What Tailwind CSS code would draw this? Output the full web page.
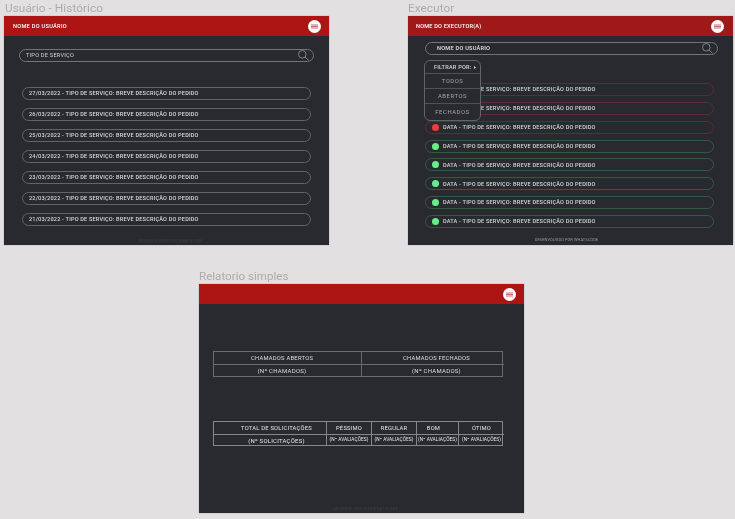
<!DOCTYPE html>
<html><head><meta charset="utf-8"><script src="https://cdn.jsdelivr.net/npm/@tailwindcss/browser@4"></script></head>
<body class="w-[735px] h-[519px] overflow-hidden bg-[#e2e0e0] font-['Roboto',sans-serif]">
<div class="relative w-[735px] h-[519px] will-change-transform">

<p class="absolute left-[5px] top-[0px] text-[11.8px] leading-[16px] text-[#adabab] tracking-[0.05px]">Usuário - Histórico</p>
<section class="absolute left-[4px] top-[16px] w-[325px] h-[229px] bg-[#292a2f] flex flex-col shadow-[0_0_1px_#888]">
  <header class="h-[20px] shrink-0 bg-[#ad1414] flex items-center justify-between pl-[9px] pr-[8px]">
    <span class="text-[5.6px] font-medium text-white tracking-[0.3px]">NOME DO USUÁRIO</span>
    <svg width="13" height="13" viewBox="0 0 13 13"><circle cx="6.5" cy="6.5" r="6.5" fill="#fff"/><path d="M3 4.5h7v1H3zM3 6h7v1H3zM3 7.5h7v1H3z" fill="#c96a6a"/></svg>
  </header>
  <div class="ml-[15px] mt-[13px] w-[295px] h-[13px] rounded-full border border-[#727477] flex items-center justify-between pl-[6px] pr-[4px]">
    <span class="text-[5.6px] text-[#d4d4d4] tracking-[0.25px]">TIPO DE SERVIÇO</span>
    <svg width="11" height="11" viewBox="0 0 11 11" fill="none" stroke="#a5a6a8" stroke-width=".7"><circle cx="4.3" cy="4.3" r="3.8"/><path d="M7 7 10.6 10.4"/></svg>
  </div>
  <div class="ml-[18px] mt-[24.5px] w-[289px] flex flex-col gap-[8.1px] text-[5.6px] font-medium text-[#d8d8d8] tracking-[0.17px]">
    <div class="h-[13px] rounded-full border border-[#626467] flex items-center pl-[6px]">27/03/2022 - TIPO DE SERVIÇO: BREVE DESCRIÇÃO DO PEDIDO</div>
    <div class="h-[13px] rounded-full border border-[#626467] flex items-center pl-[6px]">26/03/2022 - TIPO DE SERVIÇO: BREVE DESCRIÇÃO DO PEDIDO</div>
    <div class="h-[13px] rounded-full border border-[#626467] flex items-center pl-[6px]">25/03/2022 - TIPO DE SERVIÇO: BREVE DESCRIÇÃO DO PEDIDO</div>
    <div class="h-[13px] rounded-full border border-[#626467] flex items-center pl-[6px]">24/03/2022 - TIPO DE SERVIÇO: BREVE DESCRIÇÃO DO PEDIDO</div>
    <div class="h-[13px] rounded-full border border-[#626467] flex items-center pl-[6px]">23/03/2022 - TIPO DE SERVIÇO: BREVE DESCRIÇÃO DO PEDIDO</div>
    <div class="h-[13px] rounded-full border border-[#626467] flex items-center pl-[6px]">22/03/2022 - TIPO DE SERVIÇO: BREVE DESCRIÇÃO DO PEDIDO</div>
    <div class="h-[13px] rounded-full border border-[#626467] flex items-center pl-[6px]">21/03/2022 - TIPO DE SERVIÇO: BREVE DESCRIÇÃO DO PEDIDO</div>
  </div>
  <p class="mt-auto mb-[2px] pl-[8px] text-center text-[4px] leading-[5px] text-[#3f4145] tracking-[0.1px]">DESENVOLVIDO POR WHATSCODE</p>
</section>

<p class="absolute left-[408px] top-[0px] text-[11.8px] leading-[16px] text-[#adabab] tracking-[0.05px]">Executor</p>
<section class="absolute left-[408px] top-[16px] w-[325px] h-[229px] bg-[#292a2f] flex flex-col shadow-[0_0_1px_#888]">
  <header class="h-[20px] shrink-0 bg-[#9f1919] flex items-center justify-between pl-[8px] pr-[9px]">
    <span class="text-[5.6px] font-medium text-white tracking-[0.2px]">NOME DO EXECUTOR(A)</span>
    <svg width="13" height="13" viewBox="0 0 13 13"><circle cx="6.5" cy="6.5" r="6.5" fill="#fff"/><path d="M3 4.5h7v1H3zM3 6h7v1H3zM3 7.5h7v1H3z" fill="#c96a6a"/></svg>
  </header>
  <div class="ml-[17px] mt-[6px] w-[293px] h-[13px] rounded-full border border-[#727477] flex items-center justify-between pl-[11px] pr-[4px]">
    <span class="text-[5.6px] font-medium text-[#e0e0e0] tracking-[0.25px]">NOME DO USUÁRIO</span>
    <svg width="11" height="11" viewBox="0 0 11 11" fill="none" stroke="#a5a6a8" stroke-width=".7"><circle cx="4.3" cy="4.3" r="3.8"/><path d="M7 7 10.6 10.4"/></svg>
  </div>
  <div class="ml-[17px] mt-[28px] w-[289px] flex flex-col gap-[5.85px] text-[5.6px] font-medium text-[#d4d4d4] tracking-[0.17px]">
    <div class="h-[13px] rounded-full border border-[#5c2e31] flex items-center gap-[4px] pl-[6px]"><i class="block w-[7px] h-[7px] rounded-full bg-[#f23a3a]"></i>DATA - TIPO DE SERVIÇO: BREVE DESCRIÇÃO DO PEDIDO</div>
    <div class="h-[13px] rounded-full border border-[#5c2e31] flex items-center gap-[4px] pl-[6px]"><i class="block w-[7px] h-[7px] rounded-full bg-[#f23a3a]"></i>DATA - TIPO DE SERVIÇO: BREVE DESCRIÇÃO DO PEDIDO</div>
    <div class="h-[13px] rounded-full border border-[#5c2e31] flex items-center gap-[4px] pl-[6px]"><i class="block w-[7px] h-[7px] rounded-full bg-[#f23a3a]"></i>DATA - TIPO DE SERVIÇO: BREVE DESCRIÇÃO DO PEDIDO</div>
    <div class="h-[13px] rounded-full border border-[#345a42] flex items-center gap-[4px] pl-[6px]"><i class="block w-[7px] h-[7px] rounded-full bg-[#66ee88]"></i>DATA - TIPO DE SERVIÇO: BREVE DESCRIÇÃO DO PEDIDO</div>
    <div class="h-[13px] rounded-full border border-[#345a42] flex items-center gap-[4px] pl-[6px]"><i class="block w-[7px] h-[7px] rounded-full bg-[#66ee88]"></i>DATA - TIPO DE SERVIÇO: BREVE DESCRIÇÃO DO PEDIDO</div>
    <div class="h-[13px] rounded-full border border-[#345a42] flex items-center gap-[4px] pl-[6px]"><i class="block w-[7px] h-[7px] rounded-full bg-[#66ee88]"></i>DATA - TIPO DE SERVIÇO: BREVE DESCRIÇÃO DO PEDIDO</div>
    <div class="h-[13px] rounded-full border border-[#345a42] flex items-center gap-[4px] pl-[6px]"><i class="block w-[7px] h-[7px] rounded-full bg-[#66ee88]"></i>DATA - TIPO DE SERVIÇO: BREVE DESCRIÇÃO DO PEDIDO</div>
    <div class="h-[13px] rounded-full border border-[#345a42] flex items-center gap-[4px] pl-[6px]"><i class="block w-[7px] h-[7px] rounded-full bg-[#66ee88]"></i>DATA - TIPO DE SERVIÇO: BREVE DESCRIÇÃO DO PEDIDO</div>
  </div>
  <p class="mt-auto mb-[3px] pr-[8px] text-center text-[4px] leading-[5px] text-[#9a9b9d] tracking-[0.05px]">DESENVOLVIDO POR WHATSCODE</p>
  <div class="absolute left-[16px] top-[44px] w-[57px] h-[61px] rounded-[6px] border border-[#626467] bg-[#292a2f] flex flex-col text-[5.9px] text-[#a2a3a5] tracking-[0.55px]">
    <div class="h-[13px] flex items-center pl-[9px] gap-[3px] border-b border-[#4f5154] text-[#d6d6d6] text-[5.6px] font-medium tracking-[0.2px]">FILTRAR POR: <svg width="2" height="3" viewBox="0 0 2 3"><path d="M0 0 2 1.5 0 3z" fill="#ddd"/></svg></div>
    <div class="h-[15px] flex items-center justify-center border-b border-[#4f5154]">TODOS</div>
    <div class="h-[15px] flex items-center justify-center border-b border-[#4f5154]">ABERTOS</div>
    <div class="flex-1 flex items-center justify-center">FECHADOS</div>
  </div>
</section>

<p class="absolute left-[199px] top-[268px] text-[11.6px] leading-[16px] text-[#adabab]">Relatorio simples</p>
<section class="absolute left-[199px] top-[284px] w-[325px] h-[229px] bg-[#292a2f] flex flex-col shadow-[0_0_1px_#888]">
  <header class="h-[20px] shrink-0 bg-[#ad1414] flex items-center justify-end pr-[8px]">
    <svg width="13" height="13" viewBox="0 0 13 13"><circle cx="6.5" cy="6.5" r="6.5" fill="#fff"/><path d="M3 4.5h7v1H3zM3 6h7v1H3zM3 7.5h7v1H3z" fill="#c96a6a"/></svg>
  </header>
  <div class="ml-[14px] mt-[47px] w-[290px] h-[26px] grid grid-cols-[148px_142px] grid-rows-[13px_1fr] border border-[#6a6c6f] text-[5.8px] text-[#dedede] tracking-[0.25px] text-center">
    <div class="flex items-center justify-center border-r border-b border-[#6a6c6f] pr-[11px]">CHAMADOS ABERTOS</div>
    <div class="flex items-center justify-center border-b border-[#6a6c6f] pl-[7px]">CHAMADOS FECHADOS</div>
    <div class="flex items-center justify-center border-r border-[#6a6c6f] pr-[11px] text-[6px]">(Nº CHAMADOS)</div>
    <div class="flex items-center justify-center pl-[7px] text-[6px]">(Nº CHAMADOS)</div>
  </div>
  <div class="ml-[14px] mt-[44px] w-[290px] h-[25px] grid grid-cols-[113px_45px_45px_42px_45px] grid-rows-[13px_1fr] border border-[#85878a] text-[5.8px] text-[#e6e6e6] tracking-[0.22px] text-center">
    <div class="flex items-center justify-center border-r border-b border-[#85878a] pl-[13px]">TOTAL DE SOLICITAÇÕES</div>
    <div class="flex items-center justify-center border-r border-b border-[#85878a]">PÉSSIMO</div>
    <div class="flex items-center justify-center border-r border-b border-[#85878a]">REGULAR</div>
    <div class="flex items-center justify-center border-r border-b border-[#85878a] pr-[8px]">BOM</div>
    <div class="flex items-center justify-center border-b border-[#85878a]">ÓTIMO</div>
    <div class="flex items-center justify-center border-r border-[#85878a] pl-[13px] text-[6px]">(Nº SOLICITAÇÕES)</div>
    <div class="flex items-center justify-center border-r border-[#85878a] text-[4.8px] tracking-[0.05px]">(Nº AVALIAÇÕES)</div>
    <div class="flex items-center justify-center border-r border-[#85878a] text-[4.8px] tracking-[0.05px]">(Nº AVALIAÇÕES)</div>
    <div class="flex items-center justify-center border-r border-[#85878a] text-[4.8px] tracking-[0.05px]">(Nº AVALIAÇÕES)</div>
    <div class="flex items-center justify-center text-[4.8px] tracking-[0.05px]">(Nº AVALIAÇÕES)</div>
  </div>
  <p class="mt-auto mb-[2px] pl-[8px] text-center text-[4px] leading-[5px] text-[#3f4145] tracking-[0.1px]">DESENVOLVIDO POR WHATSCODE</p>
</section>
</div>
</body></html>
